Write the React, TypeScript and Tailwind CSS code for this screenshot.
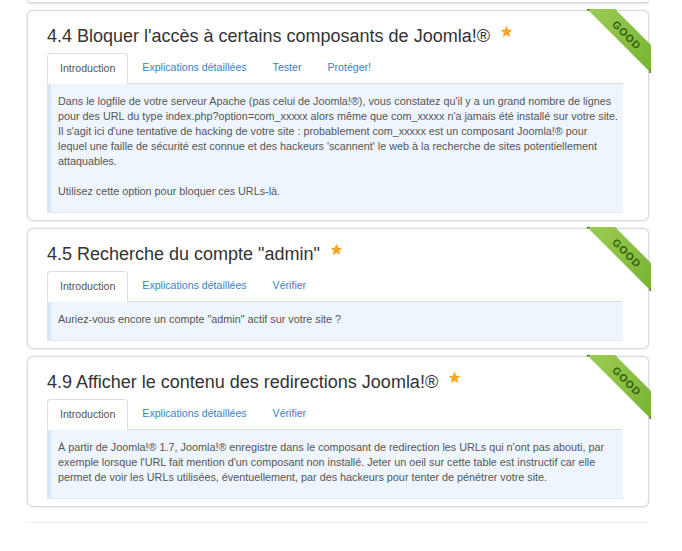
import React from "react";

type Section = {
  title: string;
  tabs: string[];
  lines: string[][];
};

const sections: Section[] = [
  {
    title: "4.4 Bloquer l'accès à certains composants de Joomla!®",
    tabs: ["Introduction", "Explications détaillées", "Tester", "Protéger!"],
    lines: [
      [
        "Dans le logfile de votre serveur Apache (pas celui de Joomla!®), vous constatez qu'il y a un grand nombre de lignes",
        "pour des URL du type index.php?option=com_xxxxx alors même que com_xxxxx n'a jamais été installé sur votre site.",
        "Il s'agit ici d'une tentative de hacking de votre site : probablement com_xxxxx est un composant Joomla!® pour",
        "lequel une faille de sécurité est connue et des hackeurs 'scannent' le web à la recherche de sites potentiellement",
        "attaquables.",
      ],
      ["Utilisez cette option pour bloquer ces URLs-là."],
    ],
  },
  {
    title: '4.5 Recherche du compte "admin"',
    tabs: ["Introduction", "Explications détaillées", "Vérifier"],
    lines: [['Auriez-vous encore un compte "admin" actif sur votre site ?']],
  },
  {
    title: "4.9 Afficher le contenu des redirections Joomla!®",
    tabs: ["Introduction", "Explications détaillées", "Vérifier"],
    lines: [
      [
        "À partir de Joomla!® 1.7, Joomla!® enregistre dans le composant de redirection les URLs qui n'ont pas abouti, par",
        "exemple lorsque l'URL fait mention d'un composant non installé. Jeter un oeil sur cette table est instructif car elle",
        "permet de voir les URLs utilisées, éventuellement, par des hackeurs pour tenter de pénétrer votre site.",
      ],
    ],
  },
];

const Star = () => (
  <svg width="13" height="13" viewBox="0 0 24 24" className="ml-[10px] mt-[1px] shrink-0">
    <path
      d="M12 1.5l3.1 7.1 7.7.7-5.8 5.1 1.7 7.6L12 18l-6.7 4 1.7-7.6-5.8-5.1 7.7-.7z"
      fill="#f5a623"
    />
  </svg>
);

const Ribbon = () => (
  <svg
    width="66"
    height="66"
    viewBox="0 0 66 66"
    className="absolute -top-[3px] -right-[4px] pointer-events-none"
  >
    <defs>
      <linearGradient id="rib" x1="0" y1="0" x2="1" y2="1">
        <stop offset="0" stopColor="#9ccc52" />
        <stop offset="1" stopColor="#78b234" />
      </linearGradient>
    </defs>
    <polygon points="1,1 29,1 65,37 65,65" fill="url(#rib)" />
    <polygon points="1,1 5,1 1,3" fill="#4f7f1c" />
    <polygon points="65,61 65,65 63,65" fill="#4f7f1c" />
    <text
      x="41"
      y="27"
      transform="rotate(45 41 27)"
      textAnchor="middle"
      dominantBaseline="central"
      fontFamily="'Liberation Sans', Arial, sans-serif"
      fontWeight="bold"
      fontSize="10.5"
      letterSpacing="1"
      fill="#2d5f0c"
    >
      GOOD
    </text>
  </svg>
);

const Card = ({ s }: { s: Section }) => (
  <div className="relative rounded-[6px] border border-[#d9d9d9] bg-white pl-[19px] pr-[25px] pt-[13px] pb-[7px] shadow-[0_0_2px_rgba(0,0,0,0.18)]">
    <div className="flex items-start">
      <h2 className="text-[18px] leading-[24px] text-[#333]">{s.title}</h2>
      <Star />
    </div>
    <div className="mt-[5px] flex border-b border-[#dddddd] text-[10.6px] leading-[15px]">
      {s.tabs.map((t, i) =>
        i === 0 ? (
          <div
            key={t}
            className="-mb-px rounded-t-[4px] border border-[#dddddd] border-b-white bg-white px-[12px] py-[7px] text-[#555]"
          >
            {t}
          </div>
        ) : (
          <div key={t} className="ml-[2px] px-[12px] py-[7px] text-[#3a82c0]">
            {t}
          </div>
        )
      )}
    </div>
    <div className="border-b border-l-[4px] border-b-[#e3ecf5] border-l-[#d6e6f5] bg-[#eef5fc] pl-[7px] pr-[8px] pt-[10px] pb-[13px] text-[10.8px] leading-[15px] text-[#555]">
      {s.lines.map((p, i) => (
        <p key={i} className={i > 0 ? "mt-[15px] whitespace-nowrap" : "whitespace-nowrap"}>
          {p.map((l, j) => (
            <React.Fragment key={j}>
              {l}
              {j < p.length - 1 && <br />}
            </React.Fragment>
          ))}
        </p>
      ))}
    </div>
    <Ribbon />
  </div>
);

export default function App() {
  return (
    <div
      className="h-[551px] overflow-hidden bg-white"
      style={{ fontFamily: "'Liberation Sans', Arial, sans-serif" }}
    >
      <div className="ml-[27px] w-[622px]">
        <div className="h-[3px] rounded-b-[6px] border border-t-0 border-[#d9d9d9] shadow-[0_1px_2px_rgba(0,0,0,0.12)]" />
        <div className="mt-[7px] flex flex-col gap-[7px]">
          {sections.map((s) => (
            <Card key={s.title} s={s} />
          ))}
        </div>
        <div className="mt-[15px] h-px bg-[#eeeeee]" />
      </div>
    </div>
  );
}
